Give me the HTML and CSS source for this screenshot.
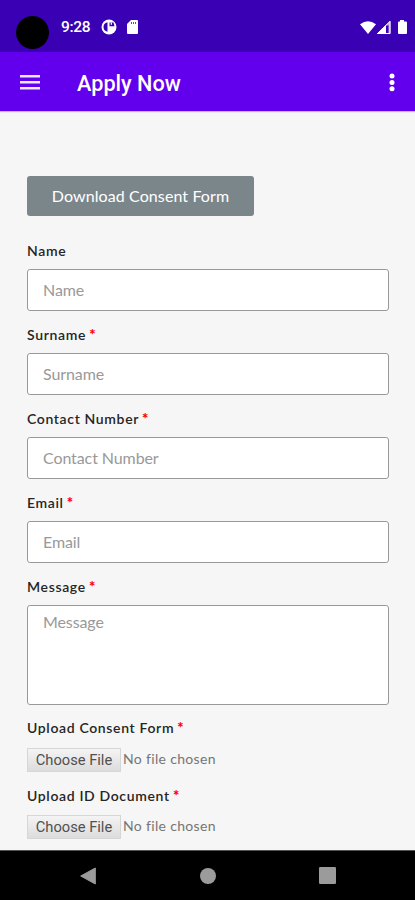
FILE: index.html
```html
<!DOCTYPE html>
<html lang="en">
<head>
<meta charset="utf-8">
<title>Apply Now</title>
<link rel="stylesheet" href="styles.css">
</head>
<body>
<div class="screen">
  <header class="status">
    <span class="camera"></span>
    <span class="clock">9:28</span>
    <svg class="app-icon" width="16" height="16" viewBox="0 0 16 16"><circle cx="8" cy="8" r="7.500" fill="#fff"/><path d="M6.500 3.200v9.600C3.500 12.200 2.500 10 2.500 8s1-4.200 4-4.800zM8.500 3.500h4l1 3.800h-5z" fill="#3a00b3"/><path d="M9.700 3.500h1.300v2.300H9.700z" fill="#fff"/></svg>
    <svg class="sd-icon" width="11" height="14" viewBox="0 0 11 14"><path d="M4 0h6q1 0 1 1v12q0 1-1 1H1q-1 0-1-1V4z" fill="#fff"/><path d="M4 2h1v2H4zM6 2h1v2H6zM8 2h1v2H8z" fill="#6a45c8"/></svg>
    <svg class="signals" width="48" height="16" viewBox="0 0 48 16"><path d="M0 4.300Q8 -2 16 4.300L8 14z" fill="#fff"/><path d="M17 14L30.500 .8V14z" fill="#b9a0ea"/><path d="M17 14L26 5.200V14z" fill="#fff"/><path d="M26 5.500h2.500V13H26z" fill="#3a00b3"/><path d="M17.500 13.500L30 1.300V13.500z" fill="none" stroke="#fff"/><path d="M40 0h4v1.500h2q1 0 1 1V13q0 1-1 1h-7q-1 0-1-1V2.500q0-1 1-1h1z" fill="#fff"/></svg>
  </header>
  <div class="toolbar">
    <svg width="20" height="15" viewBox="0 0 20 15"><path d="M0 1.300h20M0 7.300h20M0 13.300h20" stroke="#efe6ff" stroke-width="2.400"/></svg>
    <h1>Apply Now</h1>
    <svg class="more" width="6" height="19" viewBox="0 0 6 19"><g fill="#fff"><circle cx="3" cy="3" r="2.500"/><circle cx="3" cy="9.400" r="2.500"/><circle cx="3" cy="15.800" r="2.500"/></g></svg>
  </div>
  <main>
    <button class="download" type="button">Download Consent Form</button>
    <form>
      <div class="field"><label for="name">Name</label><input id="name" class="box" placeholder="Name"></div>
      <div class="field"><label for="surname">Surname <b>*</b></label><input id="surname" class="box" placeholder="Surname"></div>
      <div class="field"><label for="contact">Contact Number <b>*</b></label><input id="contact" class="box" placeholder="Contact Number"></div>
      <div class="field"><label for="email">Email <b>*</b></label><input id="email" class="box" placeholder="Email"></div>
      <div class="field message"><label for="message">Message <b>*</b></label><textarea id="message" class="box" placeholder="Message"></textarea></div>
      <div class="field upload"><label>Upload Consent Form <b>*</b></label><div class="file"><button type="button">Choose File</button><span>No file chosen</span></div></div>
      <div class="field upload"><label>Upload ID Document <b>*</b></label><div class="file"><button type="button">Choose File</button><span>No file chosen</span></div></div>
    </form>
  </main>
  <nav>
    <svg width="16" height="18" viewBox="0 0 16 18"><path d="M15.300 1v16L.7 9z" fill="#9b9b9b" stroke="#9b9b9b" stroke-linejoin="round"/></svg>
    <svg width="16" height="16" viewBox="0 0 16 16"><circle cx="8" cy="8" r="8" fill="#9b9b9b"/></svg>
    <svg width="17" height="17" viewBox="0 0 17 17"><rect width="17" height="17" rx="1.200" fill="#9b9b9b"/></svg>
  </nav>
</div>
</body>
</html>
```
FILE: styles.css
```css
* { box-sizing: border-box; }
body { margin: 0; font-family: Lato, sans-serif; }
.screen { width: 415px; height: 900px; display: flex; flex-direction: column; overflow: hidden; background: #f6f6f6; }
.status { height: 52px; flex: none; display: flex; align-items: flex-start; background: #3a00b3; color: #fff; }
.camera { width: 33px; height: 33px; margin: 16px 0 0 16px; border-radius: 50%; background: #000; }
.clock { width: 40px; margin: 18px 0 0 12px; font: 500 15.500px/19px Roboto, sans-serif; letter-spacing: -.3px; }
.app-icon { margin-top: 19px; }
.sd-icon { margin: 20px 0 0 10px; }
.signals { margin: 20px 7px 0 auto; }
.toolbar { height: 59px; flex: none; display: flex; align-items: center; padding: 2px 20px 0; background: #6200ee; box-shadow: 0 1px 1px #c8b4e6; }
.toolbar h1 { margin: 2px 0 0 37px; color: #fff; font: 500 21.700px/28px Roboto, sans-serif; }
.more { margin-left: auto; }
main { flex: 1; min-height: 0; padding: 65px 26px 0 27px; }
.download { display: block; width: 227px; height: 40px; padding: 0; border: 0; border-radius: 3px; background: #7b868b; color: #fff; font: 400 16px/40px Lato, sans-serif; letter-spacing: .1px; }
form { padding-top: 24px; }
.field { height: 84px; }
label { display: block; height: 29px; color: #252525; font-size: 14px; font-weight: 600; line-height: 21px; letter-spacing: .65px; white-space: nowrap; }
label b { margin-left: -1px; color: #f00; font-size: 15px; font-weight: 900; line-height: 1; }
.box { display: block; width: 362px; height: 42px; margin: 0; padding: 0 15px 2px; border: 1px solid #999; border-radius: 3px; outline: 0; background: #fff; color: #333; font: 400 16px/24px Lato, sans-serif; letter-spacing: -.1px; }
.box::placeholder { color: #999; opacity: 1; }
.message { height: 142px; }
textarea.box { height: 100px; padding-top: 4px; resize: none; }
.upload { height: 67.500px; }
.upload label { height: 31px; margin-top: -1px; }
.upload + .upload label { height: 30px; margin-top: 0; }
.file { display: flex; }
.file button { width: 94px; height: 24px; padding: 0; border: 1px solid #d6d6d6; background: linear-gradient(#f4f4f4, #dcdcdc); color: #505050; font: 400 14.700px/22px Roboto, sans-serif; }
.file span { margin-left: 2px; color: #757575; font-size: 14px; line-height: 21px; letter-spacing: .33px; }
nav { height: 50px; flex: none; display: flex; align-items: center; padding-left: 80px; background: #000; border-top: 1px solid #555; }
nav svg + svg { margin-left: 104px; }
nav svg + svg + svg { margin-left: 102.500px; }
```
